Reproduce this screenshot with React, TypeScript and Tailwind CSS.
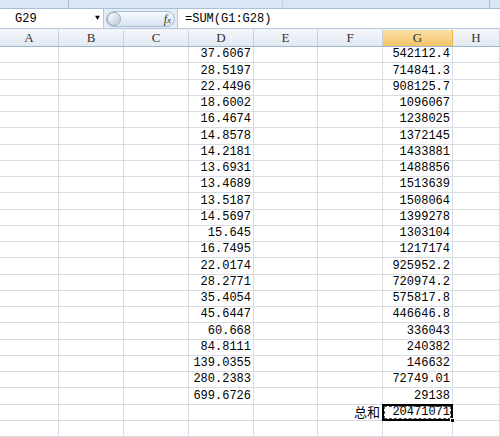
import React from 'react';

const columns = [
  { name: 'A', w: 'w-[59px]' },
  { name: 'B', w: 'w-[65px]' },
  { name: 'C', w: 'w-[65px]' },
  { name: 'D', w: 'w-[65px]' },
  { name: 'E', w: 'w-[64px]' },
  { name: 'F', w: 'w-[65px]' },
  { name: 'G', w: 'w-[70px]' },
  { name: 'H', w: 'flex-1' },
];

const dValues = [
  '37.6067', '28.5197', '22.4496', '18.6002', '16.4674', '14.8578', '14.2181', '13.6931',
  '13.4689', '13.5187', '14.5697', '15.645', '16.7495', '22.0174', '28.2771', '35.4054',
  '45.6447', '60.668', '84.8111', '139.0355', '280.2383', '699.6726',
];

const gValues = [
  '542112.4', '714841.3', '908125.7', '1096067', '1238025', '1372145', '1433881', '1488856',
  '1513639', '1508064', '1399278', '1303104', '1217174', '925952.2', '720974.2', '575817.8',
  '446646.8', '336043', '240382', '146632', '72749.01', '29138',
];

const ROWS = 24;

export default function App() {
  const rows = Array.from({ length: ROWS }, (_, i) => i);

  return (
    <div className="w-[500px] h-[437px] overflow-hidden bg-white text-[12px] text-black [font-family:'Liberation_Mono',monospace]">
      {/* ribbon bottom edge */}
      <div className="h-[9px] flex bg-[#dbe6f4] border-b border-[#a9bfd6]">
        <div className="w-[69px] border-r border-[#a9bfd6]" />
        <div className="w-[214px] border-r border-[#c3d3e6]" />
        <div className="flex-1 border-r border-[#a9bfd6] mr-[10px]" />
      </div>

      {/* formula bar */}
      <div className="h-[20px] flex items-center bg-[#e4ecf7] border-b border-[#b7c8dc]">
        <div className="w-[104px] h-full bg-white border-r border-[#b7c8dc] flex items-center pl-[15px] relative">
          <span>G29</span>
          <span className="absolute left-[95px] top-[5px] text-[8px] leading-none">▼</span>
        </div>
        <div className="w-[73px] h-full flex items-center px-[2px]">
          <div className="w-full h-[16px] rounded-full bg-gradient-to-b from-[#f7fafd] to-[#d8e3f1] border border-[#a6bbd4] flex items-center justify-between pr-[3px]">
            <div className="w-[14px] h-[14px] rounded-full bg-gradient-to-br from-white to-[#b9c9dc] border border-[#96aac2]" />
            <span className="italic text-[12px] text-[#333] [font-family:'Liberation_Serif',serif]">
              f<span className="text-[9px]">x</span>
            </span>
          </div>
        </div>
        <div className="flex-1 h-full bg-white border-l border-[#b7c8dc] flex items-center pl-[7px]">
          =SUM(G1:G28)
        </div>
      </div>

      <div className="h-[1px] bg-[#eef2f8]" />

      {/* column headers */}
      <div className="h-[17px] flex border-b border-[#9eb6ce]">
        {columns.map(c => (
          <div
            key={c.name}
            className={`${c.w} h-full flex items-center justify-center border-r text-[13px] text-[#333] [font-family:'Liberation_Serif',serif] ${
              c.name === 'G'
                ? 'bg-gradient-to-b from-[#fbe0a8] to-[#f3c466] border-[#f2b64c]'
                : 'bg-gradient-to-b from-[#f4f7fb] to-[#e2e9f2] border-[#c5d2df]'
            }`}
          >
            {c.name}
          </div>
        ))}
      </div>

      {/* grid */}
      <div>
        {rows.map(r => (
          <div key={r} className="h-[16.25px] flex">
            {columns.map(c => {
              let content: React.ReactNode = null;
              if (c.name === 'D' && dValues[r]) content = dValues[r];
              if (c.name === 'G' && gValues[r]) content = gValues[r];
              if (c.name === 'F' && r === 22) {
                content = <span className="[font-family:'Noto_Sans_CJK_SC',sans-serif] text-[13px] leading-none">总和</span>;
              }
              const selected = c.name === 'G' && r === 22;
              if (selected) content = '20471071';
              return (
                <div
                  key={c.name}
                  className={`${c.w} h-full border-r border-b border-[#d9dde3] flex items-end justify-end pr-[2px] pb-[2px] leading-none ${selected ? 'relative' : ''}`}
                >
                  {content}
                  {selected && (
                    <>
                      <div className="absolute left-[-1px] top-[-1px] right-[-1px] bottom-[-1px] border-2 border-black" />
                      <div className="absolute left-[1px] top-[1px] right-[1px] bottom-[1px] border border-dashed border-[#555]" />
                      <div className="absolute right-[-3px] bottom-[-3px] w-[5px] h-[5px] bg-black border border-white" />
                    </>
                  )}
                </div>
              );
            })}
          </div>
        ))}
      </div>
    </div>
  );
}
